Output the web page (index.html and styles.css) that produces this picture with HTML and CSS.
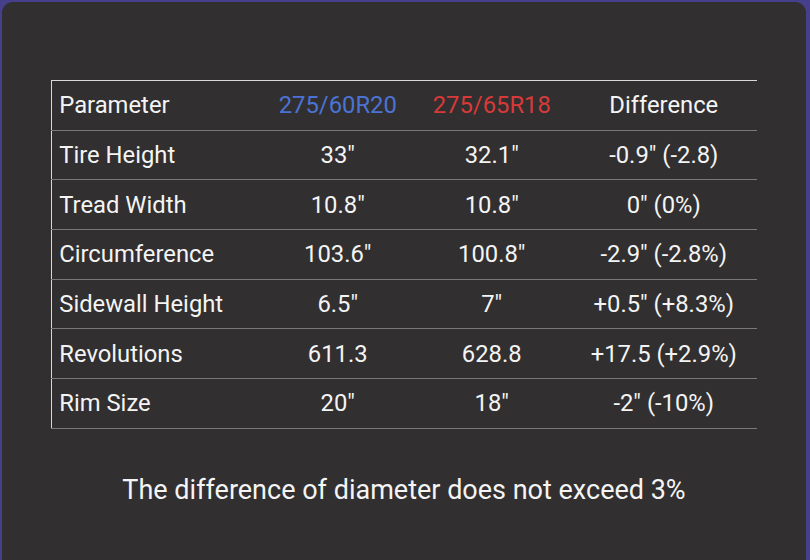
FILE: index.html
```html
<!DOCTYPE html>
<html>
<head>
<meta charset="utf-8">
<link rel="stylesheet" href="styles.css">
</head>
<body>
<div class="card">
  <table class="cmp">
    <colgroup>
      <col class="c1"><col class="c2"><col class="c3"><col class="c4">
    </colgroup>
    <tr class="head">
      <td class="name">Parameter</td>
      <td class="blue">275/60R20</td>
      <td class="red">275/65R18</td>
      <td>Difference</td>
    </tr>
    <tr><td class="name">Tire Height</td><td>33"</td><td>32.1"</td><td>-0.9" (-2.8)</td></tr>
    <tr><td class="name">Tread Width</td><td>10.8"</td><td>10.8"</td><td>0" (0%)</td></tr>
    <tr><td class="name">Circumference</td><td>103.6"</td><td>100.8"</td><td>-2.9" (-2.8%)</td></tr>
    <tr><td class="name">Sidewall Height</td><td>6.5"</td><td>7"</td><td>+0.5" (+8.3%)</td></tr>
    <tr><td class="name">Revolutions</td><td>611.3</td><td>628.8</td><td>+17.5 (+2.9%)</td></tr>
    <tr><td class="name">Rim Size</td><td>20"</td><td>18"</td><td>-2" (-10%)</td></tr>
  </table>
  <p class="note">The difference of diameter does not exceed 3%</p>
</div>
</body>
</html>
```
FILE: styles.css
```css
html, body {
  margin: 0;
  height: 100%;
  background: #463f8c;
  overflow: hidden;
}
body {
  padding: 2px 4px 0 2px;
  box-sizing: border-box;
  font-family: Roboto, "Liberation Sans", sans-serif;
  color: #f4f4f4;
}
.card {
  background: #312f2f;
  border-radius: 11px 11px 0 0;
  height: 100%;
  padding-top: 78px;
  box-sizing: border-box;
}
.cmp {
  margin: 0 auto;
  width: 705px;
  border-collapse: collapse;
  table-layout: fixed;
  border-top: 1px solid #d8d8d8;
  border-left: 1px solid #d8d8d8;
  font-size: 23.8px;
}
.c1 { width: 211px; }
.c2 { width: 150px; }
.c3 { width: 158px; }
.c4 { width: 186px; }
.cmp td {
  height: 48.7px;
  padding: 0;
  text-align: center;
  border-bottom: 1px solid #7a7878;
  line-height: 26px;
}
.cmp td.name {
  text-align: left;
  padding-left: 7px;
}
.blue { color: #4b73d6; }
.red { color: #d83a3a; }
.note {
  margin: 45px 0 0;
  text-align: center;
  font-size: 27px;
  line-height: 32px;
}
```
